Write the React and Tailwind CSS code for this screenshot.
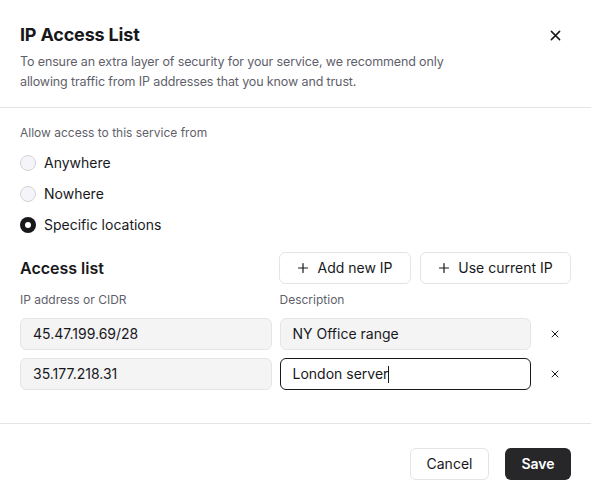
import { useState } from 'react';

function XIcon({ size = 12, stroke = 1.5 }) {
  return (
    <svg width={size} height={size} viewBox="0 0 12 12" fill="none">
      <path d="M1.5 1.5l9 9M10.5 1.5l-9 9" stroke="currentColor" strokeWidth={stroke} strokeLinecap="round" />
    </svg>
  );
}

function PlusIcon() {
  return (
    <svg width="12" height="12" viewBox="0 0 12 12" fill="none">
      <path d="M6 1.5v9M1.5 6h9" stroke="currentColor" strokeWidth="1.2" strokeLinecap="round" />
    </svg>
  );
}

function Radio({ checked, label, onClick }) {
  return (
    <button type="button" onClick={onClick} className="flex items-center gap-2 h-5 text-left">
      {checked ? (
        <span className="w-4 h-4 rounded-full bg-[#18181b] flex items-center justify-center">
          <span className="w-1.5 h-1.5 rounded-full bg-white" />
        </span>
      ) : (
        <span className="w-4 h-4 rounded-full border border-[#d4d4d8] bg-[#f5f5f9]" />
      )}
      <span className="text-sm text-[#18181b]">{label}</span>
    </button>
  );
}

const entries = [
  { ip: '45.47.199.69/28', desc: 'NY Office range' },
  { ip: '35.177.218.31', desc: 'London server', focused: true },
];

export default function App() {
  const [mode, setMode] = useState('specific');

  return (
    <div className="w-[591px] h-[495px] bg-white flex flex-col text-[#18181b]" style={{ fontFamily: 'Inter, "Noto Sans", sans-serif' }}>
      {/* Header */}
      <div className="px-5 pt-[21px] pb-[15px] border-b border-[#e4e4e7] relative">
        <h1 className="text-[18px] leading-7 font-bold tracking-[-0.01em]">IP Access List</h1>
        <p className="mt-[3px] max-w-[440px] text-[12.5px] leading-5 tracking-[-0.01em] text-[#5f5f6b]">
          To ensure an extra layer of security for your service, we recommend only allowing traffic from IP addresses that you know and trust.
        </p>
        <button className="absolute right-[30px] top-[30px] text-[#18181b]">
          <XIcon size={11} stroke={1.6} />
        </button>
      </div>

      {/* Body */}
      <div className="px-5 pt-4 pb-[33px] border-b border-[#e4e4e7]">
        <p className="text-xs leading-[18px] text-[#5f5f6b]">Allow access to this service from</p>
        <div className="mt-[11px] flex flex-col gap-[11px]">
          <Radio label="Anywhere" checked={mode === 'anywhere'} onClick={() => setMode('anywhere')} />
          <Radio label="Nowhere" checked={mode === 'nowhere'} onClick={() => setMode('nowhere')} />
          <Radio label="Specific locations" checked={mode === 'specific'} onClick={() => setMode('specific')} />
        </div>

        <div className="mt-[17px] flex items-center justify-between">
          <h2 className="text-base font-semibold">Access list</h2>
          <div className="flex gap-[9px]">
            <button className="w-[132px] h-8 rounded-md border border-[#e4e4e7] flex items-center justify-center gap-2 text-sm text-[#18181b]">
              <PlusIcon />
              Add new IP
            </button>
            <button className="w-[151px] h-8 rounded-md border border-[#e4e4e7] flex items-center justify-center gap-2 text-sm text-[#18181b]">
              <PlusIcon />
              Use current IP
            </button>
          </div>
        </div>

        <div className="mt-2 grid grid-cols-[1fr_1fr_32px] gap-x-2">
          <span className="text-xs leading-4 text-[#5f5f6b]">IP address or CIDR</span>
          <span className="text-xs leading-4 text-[#5f5f6b]">Description</span>
          <span />
        </div>

        <div className="mt-[10px] grid grid-cols-[1fr_1fr_32px] gap-2">
          {entries.map((e) => (
            <div key={e.ip} className="contents">
              <div className="h-8 rounded-md border border-[#e4e4e7] bg-[#f4f4f5] px-3 flex items-center text-sm">
                {e.ip}
              </div>
              {e.focused ? (
                <div className="h-8 rounded-md border border-[#18181b] bg-white px-3 flex items-center text-sm">
                  {e.desc}
                  <span className="w-px h-[17px] bg-[#18181b]" />
                </div>
              ) : (
                <div className="h-8 rounded-md border border-[#e4e4e7] bg-[#f4f4f5] px-3 flex items-center text-sm">
                  {e.desc}
                </div>
              )}
              <button className="h-8 flex items-center justify-center text-[#18181b]">
                <XIcon size={8} stroke={1.5} />
              </button>
            </div>
          ))}
        </div>
      </div>

      {/* Footer */}
      <div className="px-5 pt-6 flex justify-end gap-4">
        <button className="w-[79px] h-8 rounded-md border border-[#e4e4e7] bg-white text-sm text-[#18181b]">
          Cancel
        </button>
        <button className="w-[66px] h-8 rounded-md bg-[#27272a] text-sm font-semibold text-white">
          Save
        </button>
      </div>
    </div>
  );
}
